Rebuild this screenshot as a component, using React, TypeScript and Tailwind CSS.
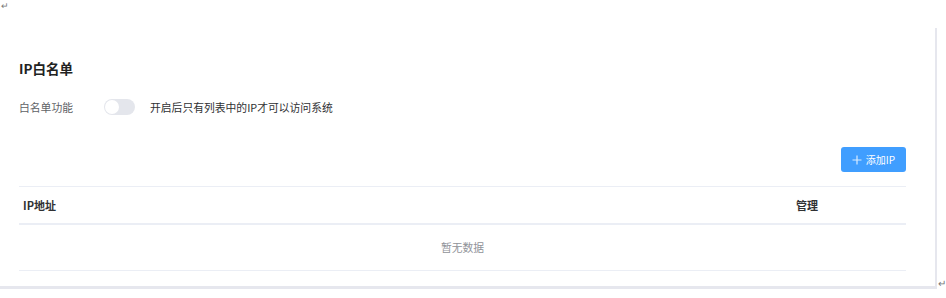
const font = { fontFamily: '"Noto Sans CJK SC", "Noto Sans", sans-serif' }

/* Interrupteur désactivé */
const Toggle = () => {
    return (
        <div className="w-[31px] h-[16px] rounded-full bg-[#e4e6ec] flex items-center px-[1px]">
            <div className="w-[14px] h-[14px] rounded-full bg-white"></div>
        </div>
    )
}

const App = () => {
    return (
        <div className="w-[946px] h-[298px] bg-white text-[#303133] overflow-hidden" style={font}>
            <div className="h-[12px] leading-[10px] text-[9px] text-[#777] pl-[1px] pt-[1px]">↵</div>
            <div className="flex items-end mt-[16px]">
                <div className="w-[939px] h-[261px] border-r-2 border-b-[3px] border-[#e6e7ee] pl-[19px] pr-[29px] pt-[30px]">
                    <div className="text-[13.5px] font-bold leading-[20px] text-[#222]">IP白名单</div>
                    <div className="flex items-center mt-[20px] h-[18px] text-[10.8px]">
                        <span className="w-[85px] text-[#606266]">白名单功能</span>
                        <Toggle />
                        <span className="ml-[15px] text-[#303133]">开启后只有列表中的IP才可以访问系统</span>
                    </div>
                    <div className="flex justify-end mt-[31px]">
                        <button className="w-[65px] h-[25px] rounded-[3px] bg-[#409eff] text-white text-[10px] flex items-center justify-center gap-[4px]">
                            <svg width="10" height="10" viewBox="0 0 10 10" className="opacity-80">
                                <path d="M5 0.5V9.5M0.5 5H9.5" stroke="white" strokeWidth="1.2" />
                            </svg>
                            <span>添加IP</span>
                        </button>
                    </div>
                    <div className="mt-[14px] border-t border-[#ebeef5]">
                        <div className="flex items-center h-[38px] border-b-2 border-[#ebeef5] text-[11px] font-bold text-[#303133]">
                            <span className="pl-[4px] flex-1">IP地址</span>
                            <span className="w-[110px]">管理</span>
                        </div>
                        <div className="flex items-center justify-center h-[46px] border-b border-[#ebeef5] text-[10.8px] text-[#909399]">
                            暂无数据
                        </div>
                    </div>
                </div>
                <div className="text-[10px] text-[#777] leading-[10px] mb-[1px] ml-[1px]">↵</div>
            </div>
        </div>
    )
}

export default App
